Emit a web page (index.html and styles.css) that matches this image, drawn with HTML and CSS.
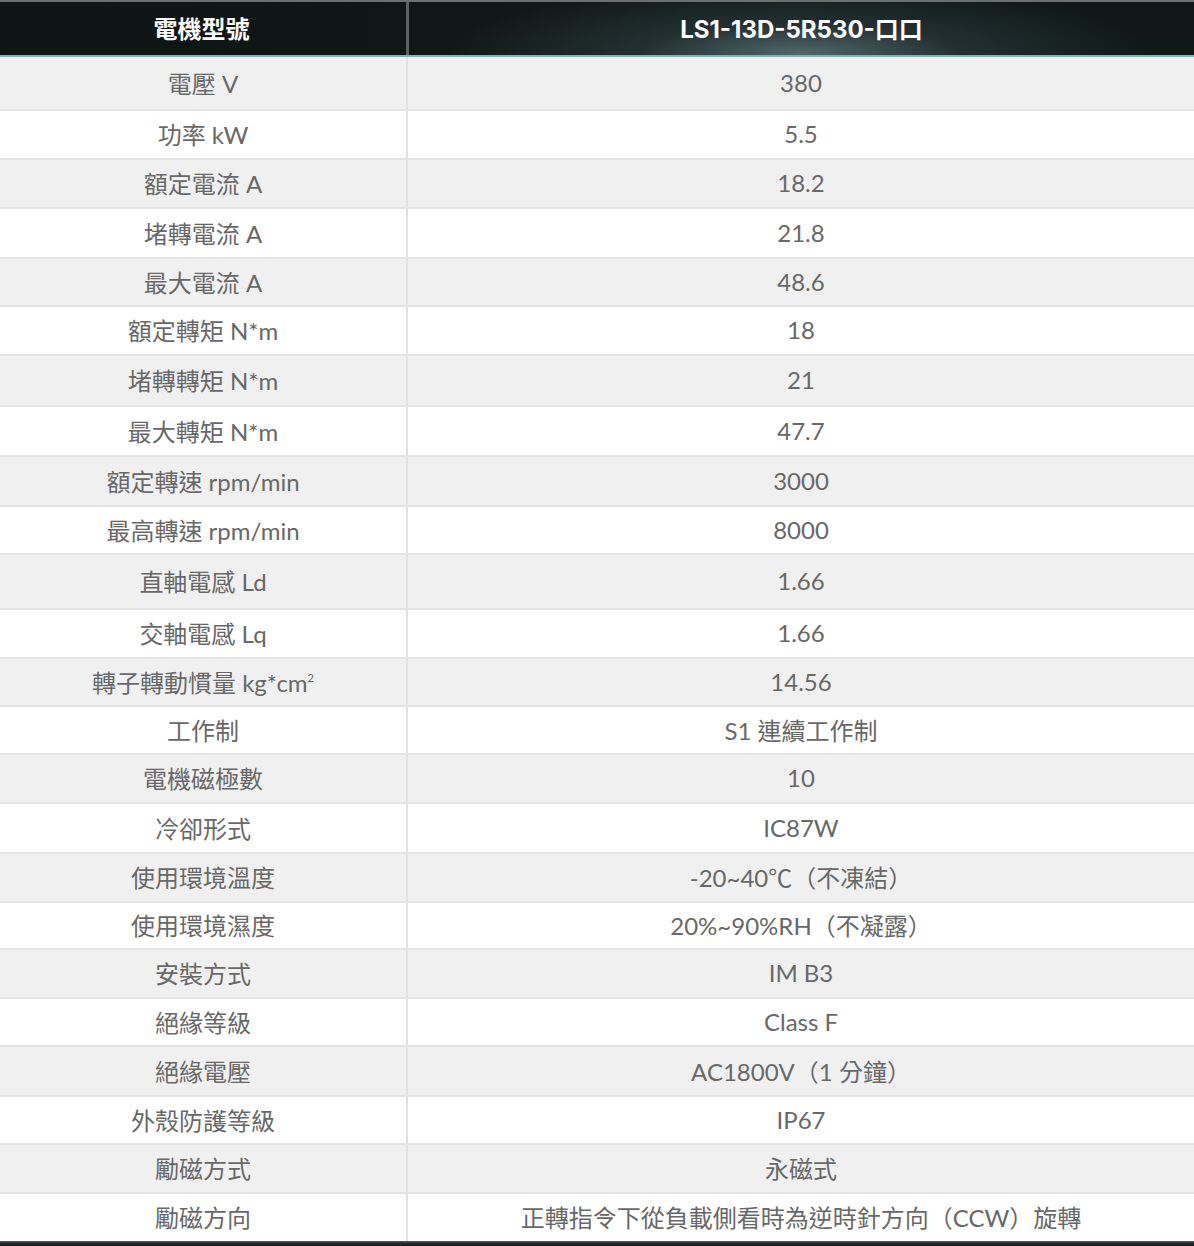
FILE: index.html
```html
<!DOCTYPE html>
<html lang="zh-Hant">
<head>
<meta charset="utf-8">
<title>電機規格</title>
<link rel="stylesheet" href="styles.css">
</head>
<body>
<div class="spec">
  <div class="head">
    <div class="cell key">電機型號</div>
    <div class="cell val">LS1-13D-5R530-口口</div>
  </div>
  <div class="row odd h54"><div class="cell key">電壓 V</div><div class="cell val">380</div></div>
  <div class="row"><div class="cell key">功率 kW</div><div class="cell val">5.5</div></div>
  <div class="row odd"><div class="cell key">額定電流 A</div><div class="cell val">18.2</div></div>
  <div class="row h50"><div class="cell key">堵轉電流 A</div><div class="cell val">21.8</div></div>
  <div class="row odd h48"><div class="cell key">最大電流 A</div><div class="cell val">48.6</div></div>
  <div class="row"><div class="cell key">額定轉矩 N*m</div><div class="cell val">18</div></div>
  <div class="row odd h51"><div class="cell key">堵轉轉矩 N*m</div><div class="cell val">21</div></div>
  <div class="row h50"><div class="cell key">最大轉矩 N*m</div><div class="cell val">47.7</div></div>
  <div class="row odd h50"><div class="cell key">額定轉速 rpm/min</div><div class="cell val">3000</div></div>
  <div class="row h48"><div class="cell key">最高轉速 rpm/min</div><div class="cell val">8000</div></div>
  <div class="row odd h55"><div class="cell key">直軸電感 Ld</div><div class="cell val">1.66</div></div>
  <div class="row"><div class="cell key">交軸電感 Lq</div><div class="cell val">1.66</div></div>
  <div class="row odd h48"><div class="cell key">轉子轉動慣量 kg*cm<sup>2</sup></div><div class="cell val">14.56</div></div>
  <div class="row h48"><div class="cell key">工作制</div><div class="cell val">S1 連續工作制</div></div>
  <div class="row odd"><div class="cell key">電機磁極數</div><div class="cell val">10</div></div>
  <div class="row h50"><div class="cell key">冷卻形式</div><div class="cell val">IC87W</div></div>
  <div class="row odd"><div class="cell key">使用環境溫度</div><div class="cell val">-20~40℃（不凍結）</div></div>
  <div class="row h47"><div class="cell key">使用環境濕度</div><div class="cell val">20%~90%RH（不凝露）</div></div>
  <div class="row odd"><div class="cell key">安裝方式</div><div class="cell val">IM B3</div></div>
  <div class="row h48"><div class="cell key">絕緣等級</div><div class="cell val">Class F</div></div>
  <div class="row odd h50"><div class="cell key">絕緣電壓</div><div class="cell val">AC1800V（1 分鐘）</div></div>
  <div class="row h48"><div class="cell key">外殼防護等級</div><div class="cell val">IP67</div></div>
  <div class="row odd"><div class="cell key">勵磁方式</div><div class="cell val">永磁式</div></div>
  <div class="row h47 last"><div class="cell key">勵磁方向</div><div class="cell val">正轉指令下從負載側看時為逆時針方向（CCW）旋轉</div></div>
  <div class="foot"></div>
</div>
</body>
</html>
```

FILE: styles.css
```css
html, body {
  margin: 0;
  padding: 0;
  background: #ffffff;
}

.spec {
  width: 1194px;
  font-family: Lato, "Noto Sans CJK TC", sans-serif;
  font-size: 24px;
  color: #686868;
}

.head, .row {
  display: grid;
  grid-template-columns: 406px 1fr;
  box-sizing: border-box;
}

.head {
  height: 57px;
  border-top: 2px solid #6a6f6f;
  border-bottom: 2px solid #7fb0b2;
  background:
    radial-gradient(ellipse 360px 70px at 800px 52px, rgba(92,118,122,0.85) 0%, rgba(45,62,64,0.6) 45%, rgba(16,23,23,0) 100%),
    linear-gradient(90deg, #0f1414 0%, #111817 50%, #0f1717 100%);
  color: #ffffff;
  font-family: Inter, "Noto Sans CJK TC", sans-serif;
  font-weight: 700;
}

.head .val {
  border-left: 3px solid #5c6262;
}

.row {
  height: 49px;
  border-bottom: 2px solid #e4e4e4;
  background: #ffffff;
}

.row.odd {
  background: #f0f0f0;
}

.row.last {
  border-bottom: none;
}

.h47 { height: 47px; }
.h48 { height: 48px; }
.h50 { height: 50px; }
.h51 { height: 51px; }
.h54 { height: 54px; }
.h55 { height: 55px; }

.cell {
  display: flex;
  align-items: center;
  justify-content: center;
  white-space: nowrap;
  padding-bottom: 2px;
}

.head .cell {
  padding-bottom: 3px;
}

.row .val {
  border-left: 2px solid #e2e2e2;
}

.head .key {
  padding-right: 3px;
}

sup {
  font-size: 11px;
  line-height: 0;
  position: relative;
  top: -3px;
  vertical-align: super;
}

.foot {
  height: 7px;
  background: linear-gradient(180deg, #52605f 0%, #1a2424 40%, #162020 100%);
}
```
